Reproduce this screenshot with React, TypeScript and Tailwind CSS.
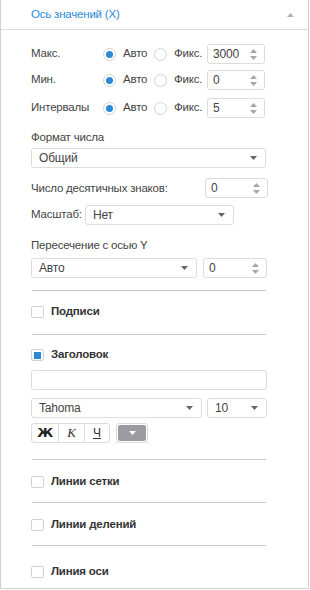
import React from "react";

const font = { fontFamily: '"Liberation Sans", Arial, sans-serif' };

const Radio = ({ checked }: { checked?: boolean }) => (
  <span className="flex h-[13px] w-[13px] shrink-0 items-center justify-center rounded-full border border-[#d2d2d2] bg-white">
    {checked && <span className="h-[7px] w-[7px] rounded-full bg-[#2b8ad8]" />}
  </span>
);

const Spinner = ({ value, className }: { value: string; className: string }) => (
  <div className={`flex h-[20px] shrink-0 items-center justify-between rounded-[3px] border border-[#dcdcdc] bg-white pl-[5px] pr-[7px] ${className}`}>
    <span className="text-[12px] text-[#444]">{value}</span>
    <span className="flex flex-col gap-[3px]">
      <svg width="7" height="4" viewBox="0 0 7 4"><path d="M0 4 L3.5 0 L7 4Z" fill="#a8a8a8" /></svg>
      <svg width="7" height="4" viewBox="0 0 7 4"><path d="M0 0 L3.5 4 L7 0Z" fill="#a8a8a8" /></svg>
    </span>
  </div>
);

const Select = ({ value, className }: { value: string; className: string }) => (
  <div className={`flex h-[20px] shrink-0 items-center justify-between rounded-[3px] border border-[#dcdcdc] bg-white pl-[7px] pr-[8px] ${className}`}>
    <span className="text-[12px] text-[#444]">{value}</span>
    <svg width="7" height="4" viewBox="0 0 7 4"><path d="M0 0 L3.5 4 L7 0Z" fill="#666" /></svg>
  </div>
);

const Check = ({ label, checked, className }: { label: string; checked?: boolean; className: string }) => (
  <div className={`flex h-[16px] items-center gap-[7px] ${className}`}>
    <span className="flex h-[12px] w-[13px] items-center justify-center rounded-[2px] border border-[#d2d2d2] bg-white">
      {checked && <span className="h-[7px] w-[7px] bg-[#2b8ad8]" />}
    </span>
    <span className="text-[11.5px] font-bold text-[#333]">{label}</span>
  </div>
);

const AxisRow = ({ label, value, className }: { label: string; value: string; className: string }) => (
  <div className={`flex h-[20px] items-center whitespace-nowrap ${className}`}>
    <span className="w-[72px] shrink-0">{label}</span>
    <Radio checked />
    <span className="ml-[7px] w-[31px] shrink-0">Авто</span>
    <Radio />
    <span className="ml-[7px] w-[33px] shrink-0">Фикс.</span>
    <Spinner value={value} className="w-[58px]" />
  </div>
);

const Divider = ({ className }: { className: string }) => (
  <div className={`ml-[1px] h-px w-[234px] bg-[#c9c9c9] ${className}`} />
);

export default function App() {
  return (
    <div style={font} className="h-[589px] w-[309px] border-x border-b border-[#d0d0d0] bg-white">
      <div className="flex h-[30px] items-center justify-between border-b border-[#dadada] pl-[30px] pr-[14px]">
        <span className="text-[11.5px] tracking-[-0.2px] text-[#2b8ad8]">Ось значений (X)</span>
        <svg width="7" height="4" viewBox="0 0 7 4"><path d="M0 4 L3.5 0 L7 4Z" fill="#b0b0b0" /></svg>
      </div>

      <div className="pl-[30px] text-[11.5px] tracking-[-0.2px] text-[#444]">
        <AxisRow label="Макс." value="3000" className="mt-[14px]" />
        <AxisRow label="Мин." value="0" className="mt-[6px]" />
        <AxisRow label="Интервалы" value="5" className="mt-[8px]" />

        <div className="mt-[11px] h-[16px] leading-[16px]">Формат числа</div>
        <Select value="Общий" className="mt-[3px] w-[235px]" />

        <div className="mt-[10px] flex h-[20px] items-center whitespace-nowrap">
          <span className="w-[174px] shrink-0 pt-[1px]">Число десятичных знаков:</span>
          <Spinner value="0" className="w-[63px]" />
        </div>

        <div className="mt-[7px] flex h-[20px] items-center whitespace-nowrap">
          <span className="w-[54px] shrink-0">Масштаб:</span>
          <Select value="Нет" className="w-[149px]" />
        </div>

        <div className="mt-[12px] h-[16px] leading-[16px]">Пересечение с осью Y</div>
        <div className="mt-[5px] flex gap-[6px]">
          <Select value="Авто" className="w-[166px]" />
          <Spinner value="0" className="w-[64px]" />
        </div>

        <Divider className="mt-[12px]" />
        <Check label="Подписи" className="mt-[13px]" />
        <Divider className="mt-[14px]" />
        <Check label="Заголовок" checked className="mt-[12px]" />

        <div className="mt-[7px] h-[20px] w-[236px] rounded-[3px] border border-[#dcdcdc] bg-white" />
        <div className="mt-[8px] flex gap-[5px]">
          <Select value="Tahoma" className="w-[171px]" />
          <Select value="10" className="w-[60px]" />
        </div>

        <div className="mt-[5px] flex gap-[6px]">
          <div className="flex h-[20px] overflow-hidden rounded-[3px] border border-[#dcdcdc] bg-white">
            <span className="flex w-[26px] items-center justify-center text-[13px] font-bold text-[#222]" style={{ fontFamily: '"DejaVu Sans", sans-serif' }}>Ж</span>
            <span className="flex w-[26px] items-center justify-center border-l border-[#dcdcdc] text-[13px] italic text-[#333]" style={{ fontFamily: '"Liberation Serif", serif' }}>К</span>
            <span className="flex w-[25px] items-center justify-center border-l border-[#dcdcdc] text-[12px] text-[#333] underline">Ч</span>
          </div>
          <div className="flex h-[20px] w-[32px] items-center justify-center rounded-[3px] border border-[#dcdcdc] bg-white p-[1px]">
            <div className="flex h-full w-full items-center justify-center rounded-[2px] bg-[#9b9ba1]">
              <svg width="7" height="4" viewBox="0 0 7 4"><path d="M0 0 L3.5 4 L7 0Z" fill="#fff" /></svg>
            </div>
          </div>
        </div>

        <Divider className="mt-[16px]" />
        <Check label="Линии сетки" className="mt-[14px]" />
        <Divider className="mt-[12px]" />
        <Check label="Линии делений" className="mt-[14px]" />
        <Divider className="mt-[12px]" />
        <Check label="Линия оси" className="mt-[18px]" />
      </div>
    </div>
  );
}
